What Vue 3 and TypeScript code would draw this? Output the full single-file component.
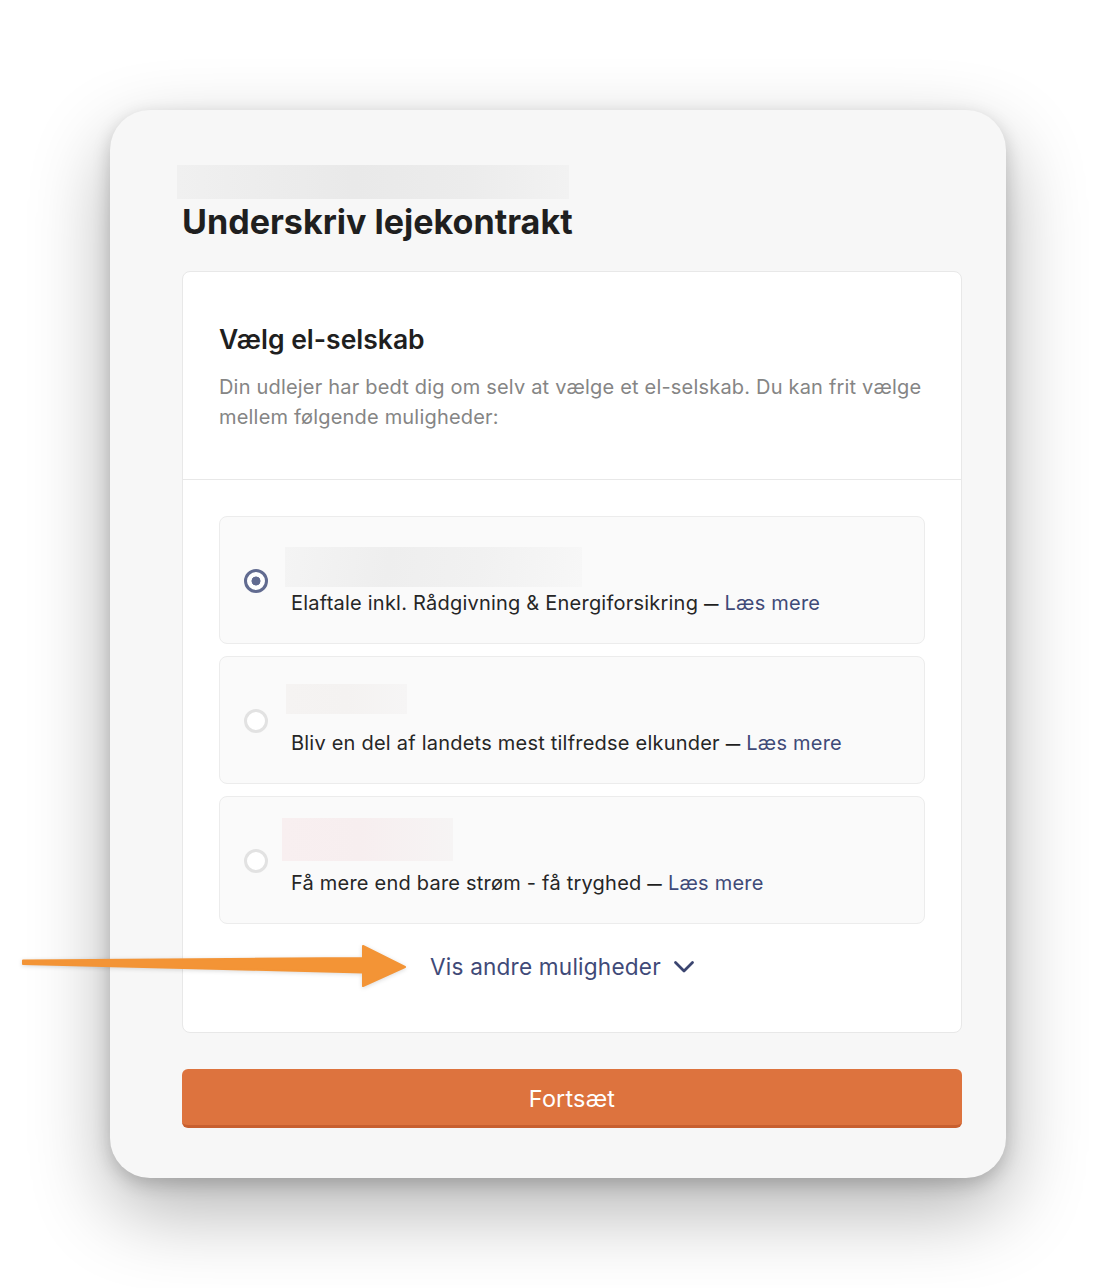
<script setup lang="ts">
interface Option {
  id: string
  text: string
  selected: boolean
}

const options: Option[] = [
  { id: 'one', text: 'Elaftale inkl. Rådgivning & Energiforsikring', selected: true },
  { id: 'two', text: 'Bliv en del af landets mest tilfredse elkunder', selected: false },
  { id: 'three', text: 'Få mere end bare strøm - få tryghed', selected: false },
]
</script>

<template>
  <div class="page">
    <main class="window">
      <div class="heading">
        <div class="blur blur-top"></div>
        <h1>Underskriv lejekontrakt</h1>
      </div>

      <section class="card">
        <header class="card-head">
          <h2>Vælg el-selskab</h2>
          <p>Din udlejer har bedt dig om selv at vælge et el-selskab. Du kan frit vælge mellem følgende muligheder:</p>
        </header>
        <div class="card-body">
          <label v-for="option in options" :key="option.id" class="option">
            <span class="radio" :class="{ selected: option.selected }"></span>
            <span class="option-main">
              <span class="logo-slot">
                <span class="blur" :class="`logo-${option.id}`"></span>
              </span>
              <span class="option-text">{{ option.text }} <span class="dash">—</span> <a href="#" class="link">Læs mere</a></span>
            </span>
          </label>

          <button type="button" class="more">
            <span>Vis andre muligheder</span>
            <svg width="22" height="14" viewBox="0 0 22 14" fill="none" aria-hidden="true">
              <path d="M2.5 2.5 L11 11 L19.5 2.5" stroke="#3b4570" stroke-width="2.8" stroke-linecap="round" stroke-linejoin="round" />
            </svg>
          </button>
        </div>
      </section>

      <button type="button" class="submit">Fortsæt</button>
    </main>

    <svg class="arrow" width="420" height="70" viewBox="0 0 420 70" aria-hidden="true">
      <path
        d="M23 20.5 L363 18 L363 6 L405 27 L363 46 L363 32.5 L23 24 Z"
        fill="#f39436"
        stroke="#f39436"
        stroke-width="2"
        stroke-linejoin="round"
      />
    </svg>
  </div>
</template>

<style scoped>
.page {
  position: relative;
  width: 1116px;
  height: 1288px;
  overflow: hidden;
  background: #fff;
  padding: 110px 0 0 110px;
  box-sizing: border-box;
  font-family: Inter, "Liberation Sans", sans-serif;
}

.window {
  width: 896px;
  height: 1068px;
  box-sizing: border-box;
  padding: 90px 44px 0 72px;
  background: #f7f7f7;
  border-radius: 40px;
  box-shadow:
    0 32px 80px rgba(0, 0, 0, 0.3),
    0 6px 18px rgba(0, 0, 0, 0.18);
  display: flex;
  flex-direction: column;
}

.heading {
  position: relative;
  height: 71px;
}

.heading h1 {
  margin: 0;
  padding-top: 1px;
  font-size: 34.1px;
  line-height: 42px;
  font-weight: 700;
  color: #1f1f1f;
}

.blur {
  display: block;
  filter: blur(0.5px);
}

.blur-top {
  position: absolute;
  left: -5px;
  top: -35px;
  width: 392px;
  height: 34px;
  background: linear-gradient(90deg, #f0f0f0, #e9e9e9 45%, #ececec 75%, #f2f2f2);
}

.card {
  background: #fff;
  border: 1px solid #e8e8e8;
  border-radius: 8px;
  height: 762px;
  box-sizing: border-box;
}

.card-head {
  height: 208px;
  box-sizing: border-box;
  padding: 49px 36px 0;
  border-bottom: 1px solid #e8e8e8;
}

.card-head h2 {
  margin: 0 0 15px;
  font-size: 26.5px;
  line-height: 36px;
  font-weight: 600;
  color: #1f1f1f;
}

.card-head p {
  margin: 0;
  font-size: 20px;
  line-height: 30px;
  letter-spacing: 0.19px;
  color: #858585;
}

.card-body {
  padding: 36px 36px 0;
  display: flex;
  flex-direction: column;
  gap: 12px;
}

.option {
  height: 128px;
  box-sizing: border-box;
  display: flex;
  align-items: center;
  padding: 0 20px 0 24px;
  background: #fafafa;
  border: 1px solid #ececec;
  border-radius: 8px;
}

.radio {
  flex: none;
  width: 24px;
  height: 24px;
  box-sizing: border-box;
  border-radius: 50%;
  border: 3px solid #e2e2e2;
  background: #fff;
  margin: 1px 23px 0 0;
}

.radio.selected {
  border-color: #616b90;
  background: radial-gradient(circle, #616b90 0 4.2px, #fff 4.8px);
}

.option-main {
  display: flex;
  flex-direction: column;
  align-self: stretch;
  padding-top: 30px;
}

.logo-slot {
  display: block;
  height: 42px;
}

.logo-one {
  width: 297px;
  height: 40px;
  margin-left: -6px;
  background: linear-gradient(100deg, #f4f4f4, #eeeeee 35%, #f1f1f1 65%, #f7f7f7);
}

.logo-two {
  width: 121px;
  height: 30px;
  margin: -3px 0 0 -5px;
  background: linear-gradient(90deg, #f5f3f2, #f4f2f1 50%, #f6f5f5);
}

.logo-three {
  width: 171px;
  height: 43px;
  margin: -9px 0 0 -9px;
  background: linear-gradient(90deg, #f8eff0, #f7eeef 45%, #f6f4f4);
}

.option-text {
  display: block;
  font-size: 20px;
  line-height: 28px;
  letter-spacing: 0.22px;
  color: #262626;
  white-space: nowrap;
}

.dash {
  display: inline-block;
  font-size: 14.5px;
  font-weight: 700;
  line-height: 1;
  vertical-align: 1.5px;
  color: #1f1f1f;
}

.link {
  color: #3f4a78;
  text-decoration: none;
}

.more {
  align-self: flex-start;
  margin: 15px 0 0 211px;
  padding: 0;
  border: 0;
  background: none;
  display: flex;
  align-items: center;
  gap: 12px;
  font: inherit;
  font-size: 22.6px;
  letter-spacing: 0.2px;
  line-height: 32px;
  color: #3f4a78;
}

.submit {
  margin-top: 36px;
  height: 59px;
  width: 780px;
  border: 0;
  border-bottom: 3px solid #c85f2f;
  border-radius: 6px;
  background: #dd733e;
  color: #fff;
  font: inherit;
  font-size: 23.4px;
  letter-spacing: 0.2px;
  font-weight: 400;
  padding: 3px 0 0;
}

.arrow {
  position: absolute;
  left: 0;
  top: 940px;
  filter: drop-shadow(0 1px 2px rgba(0, 0, 0, 0.15));
}
</style>
